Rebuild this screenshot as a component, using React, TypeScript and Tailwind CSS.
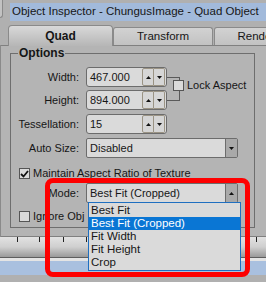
import React from "react";

const items = ["Best Fit", "Best Fit (Cropped)", "Fit Width", "Fit Height", "Crop"];
const ticks = [17, 39, 63, 86, 110, 134, 158, 182, 206, 230, 256];

function Tri({ up }: { up?: boolean }) {
  return (
    <svg width="5" height="3" viewBox="0 0 5 3">
      <path d={up ? "M2.5 0 L5 3 L0 3 Z" : "M0 0 L5 0 L2.5 3 Z"} fill="#111" />
    </svg>
  );
}

function Spinner() {
  return (
    <div className="mr-[1px] flex h-[18px] w-[23px]">
      <div className="flex w-[12px] items-center justify-center rounded-l-[2px] border border-[#9a9384] bg-[#d6d6d6]">
        <Tri up />
      </div>
      <div className="flex w-[11px] items-center justify-center rounded-r-[2px] border border-l-0 border-[#9a9384] bg-[#d6d6d6]">
        <Tri />
      </div>
    </div>
  );
}

function Label({ text }: { text: string }) {
  return <span className="w-[68px] text-right leading-none">{text}</span>;
}

function NumberField({ label, value }: { label: string; value: string }) {
  return (
    <div className="flex h-[20px] items-center">
      <Label text={label} />
      <div className="ml-[7px] flex h-[20px] w-[81px] items-center justify-between rounded-[3px] border border-[#6c6c6c] bg-[#dadada] pl-[3px]">
        <span className="leading-none">{value}</span>
        <Spinner />
      </div>
    </div>
  );
}

function Select({ label, value, up }: { label: string; value: string; up?: boolean }) {
  return (
    <div className="flex h-[20px] items-center">
      <Label text={label} />
      <div className="ml-[7px] flex h-[20px] w-[152px] items-center justify-between rounded-[2px] border border-[#6c6c6c] bg-[#dadada] pl-[3px]">
        <span className="leading-none">{value}</span>
        <div className="flex h-full w-[12px] items-center justify-center border-l border-[#6c6c6c] bg-[#a9a9a9]">
          <Tri up={up} />
        </div>
      </div>
    </div>
  );
}

function Check({ checked }: { checked?: boolean }) {
  return (
    <div className="flex h-[11px] w-[11px] shrink-0 items-center justify-center border border-[#555] bg-[#dadada]">
      {checked && (
        <svg width="9" height="8" viewBox="0 0 9 8">
          <path d="M1 4 L3.5 6.5 L8 1" stroke="#111" strokeWidth="1.8" fill="none" />
        </svg>
      )}
    </div>
  );
}

export default function App() {
  return (
    <div className="relative h-[282px] w-[266px] overflow-hidden bg-[#b0b0b0] font-['Liberation_Sans',Arial,sans-serif] text-[11px] text-[#161616]">
      {/* title */}
      <div className="flex h-[25px]">
        <div className="h-[18px] w-[3px] rounded-br-[3px] border-r border-b border-[#8a8a8a] bg-[#c2c2c2]" />
        <div className="ml-[7px] mt-[3px] flex h-[18px] flex-1 items-center bg-[#a2badb] pl-[2px]">
          <span className="whitespace-nowrap text-[11.5px] leading-none">Object Inspector - ChungusImage - Quad Object</span>
        </div>
      </div>

      {/* tabs */}
      <div className="flex h-[20px] items-end pl-[8px]">
        <div className="relative z-10 -mb-[1px] flex h-[21px] w-[105px] shrink-0 items-center justify-center rounded-t-[4px] border border-b-0 border-[#8a8a8a] bg-gradient-to-b from-[#d9d9d9] to-[#b6b6b6] text-[12px] font-bold">
          Quad
        </div>
        <div className="flex h-[18px] w-[100px] shrink-0 items-center justify-center rounded-t-[3px] border border-b-0 border-[#8a8a8a] bg-gradient-to-b from-[#d2d2d2] to-[#c2c2c2] text-[11.5px]">
          Transform
        </div>
        <div className="ml-[1px] flex h-[18px] w-[100px] shrink-0 items-center justify-center rounded-t-[3px] border border-b-0 border-[#8a8a8a] bg-gradient-to-b from-[#d2d2d2] to-[#c2c2c2] text-[11.5px]">
          Rendering
        </div>
      </div>

      {/* panel */}
      <div className="flex h-[192px]">
        <div className="w-[3px] border-r border-[#8a8a8a] bg-[#c0c0c0]" />
        <div className="h-full w-[280px] shrink-0 border-t border-b border-[#808080] bg-[#b4b4b4] pl-[9px] pt-[7px]">
          <div className="relative h-[175px] w-[245px] border border-[#6e6e6e]">
            <span className="absolute -top-[8px] left-[7px] bg-[#b4b4b4] px-[1px] text-[12px] font-bold leading-[14px]">
              Options
            </span>
            <div className="flex flex-col pt-[13px]">
              <div className="flex items-center">
                <div className="flex flex-col gap-[3px]">
                  <NumberField label="Width:" value="467.000" />
                  <NumberField label="Height:" value="894.000" />
                </div>
                <div className="h-[24px] w-[13px] border-y border-r border-[#5a5a5a]" />
                <div className="-ml-[7px] mt-[-7px] flex items-center">
                  <Check />
                  <span className="ml-[3px] leading-none">Lock Aspect</span>
                </div>
              </div>
              <div className="mt-[4px]">
                <NumberField label="Tessellation:" value="15" />
              </div>
              <div className="mt-[4px]">
                <Select label="Auto Size:" value="Disabled" />
              </div>
              <div className="ml-[8px] mt-[10px] flex items-center">
                <Check checked />
                <span className="ml-[3px] leading-none">Maintain Aspect Ratio of Texture</span>
              </div>
              <div className="mt-[4px]">
                <Select label="Mode:" value="Best Fit (Cropped)" up />
              </div>
              <div className="ml-[8px] mt-[8px] flex items-center">
                <Check />
                <span className="ml-[3px] whitespace-nowrap leading-none">Ignore Obj</span>
              </div>
            </div>
          </div>
        </div>
      </div>

      {/* ruler */}
      <div className="relative h-[21px] border-b border-[#5e5e5e] bg-gradient-to-b from-[#e2e2e2] via-[#cfcfcf] to-[#9a9a9a]">
        {ticks.map((x) => (
          <div key={x} className="absolute top-0 h-[5px] w-[1px] bg-[#222]" style={{ left: x }} />
        ))}
      </div>
      <div className="h-[3px] bg-[#e4e4e4]" />
      <div className="h-[14px] bg-[#a9c0df]" />

      {/* dropdown list */}
      <div className="absolute left-[88px] top-[202px] z-20 h-[69px] w-[153px] border border-[#1f6fc0] bg-[#dadada] pt-[1px]">
        {items.map((it, i) => (
          <div
            key={it}
            className={
              i === 1
                ? "flex h-[13px] items-center bg-[#0a76d4] pl-[2px] text-[11.5px] leading-none text-white"
                : "flex h-[13px] items-center pl-[2px] text-[11.5px] leading-none"
            }
          >
            {it}
          </div>
        ))}
      </div>

      {/* highlight */}
      <div className="pointer-events-none absolute left-[45px] top-[178px] z-30 h-[99px] w-[205px] rounded-[8px] border-[5px] border-[#fe0000]" />
    </div>
  );
}
